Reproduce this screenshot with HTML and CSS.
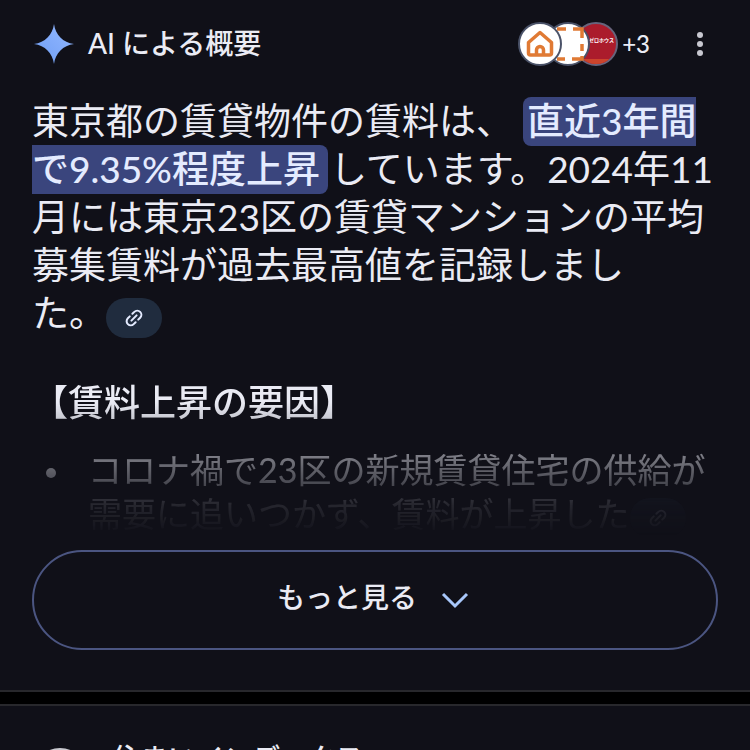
FILE: index.html
```html
<!DOCTYPE html>
<html lang="ja">
<head>
<meta charset="utf-8">
<meta name="viewport" content="width=device-width, initial-scale=1">
<title>AI による概要</title>
<link rel="stylesheet" href="styles.css">
</head>
<body>
<svg class="defs" aria-hidden="true">
  <symbol id="link" viewBox="0 0 24 24">
    <g transform="rotate(-45 12 12)" fill="none" stroke="currentColor" stroke-width="2.2" stroke-linecap="round">
      <path d="M10 7.500H7a4.500 4.500 0 0 0 0 9h3"/>
      <path d="M14 7.500h3a4.500 4.500 0 0 1 0 9h-3"/>
      <path d="M8 12h8"/>
    </g>
  </symbol>
</svg>
<main class="card overview">
  <header class="head">
    <svg class="spark" viewBox="0 0 40 40" aria-hidden="true">
      <defs><linearGradient id="blue" x1="0" y1="1" x2="1" y2="0"><stop offset="0" stop-color="#6e9df5"/><stop offset="1" stop-color="#94b9ff"/></linearGradient></defs>
      <path fill="url(#blue)" d="M20 0C21.500 11 29 18.500 40 20C29 21.500 21.500 29 20 40C18.500 29 11 21.500 0 20C11 18.500 18.500 11 20 0Z"/>
    </svg>
    <h1 class="title">AI による概要</h1>
    <button class="sources" type="button" aria-label="ソース">
      <svg class="source front" viewBox="0 0 44 44" aria-hidden="true">
        <circle cx="22" cy="22" r="21" fill="#fff" stroke="#4a5268" stroke-width="2"/>
        <path d="M10.500 20.500L22 10.500l11.500 10V31q0 2-2 2h-19q-2 0-2-2ZM18.500 33v-5a3.500 3.500 0 0 1 7 0v5" fill="none" stroke="#e07a34" stroke-width="3.500" stroke-linejoin="round"/>
      </svg>
      <svg class="source middle" viewBox="0 0 44 44" aria-hidden="true">
        <circle cx="22" cy="22" r="21" fill="#fff" stroke="#4a5268" stroke-width="2"/>
        <path d="M11 7h9M27 7h9v9M36 22v7M11 37h8M26 37h10v-3" fill="none" stroke="#e07a34" stroke-width="3.500"/>
      </svg>
      <svg class="source back" viewBox="0 0 44 44" aria-hidden="true">
        <defs><clipPath id="disc"><circle cx="22" cy="22" r="20"/></clipPath></defs>
        <circle cx="22" cy="22" r="21" fill="#ab1c2c" stroke="#68647c" stroke-width="2"/>
        <path clip-path="url(#disc)" d="M0 37h44v7H0Z" fill="#cc442c"/>
        <text class="brand" x="15" y="20">ゼロホウス</text>
      </svg>
      <span class="count">+3</span>
    </button>
    <button class="menu" type="button" aria-label="メニュー">
      <svg viewBox="0 0 8 28" aria-hidden="true"><g fill="#c8c8d0"><circle cx="4" cy="5" r="3"/><circle cx="4" cy="14" r="3"/><circle cx="4" cy="23" r="3"/></g></svg>
    </button>
  </header>
  <p class="summary">東京都の賃貸物件の賃料は、<mark>直近3年間で9.35%程度上昇</mark>しています。2024年11月には東京23区の賃貸マンションの平均募集賃料が過去最高値を記録しまし<span class="keep">た。<a class="cite" href="#source-1" aria-label="リンク"><svg viewBox="0 0 24 24"><use href="#link"/></svg></a></span></p>
  <section class="more-text">
    <h2>【賃料上昇の要因】</h2>
    <ul>
      <li>コロナ禍で23区の新規賃貸住宅の供給が需要に追いつかず、賃料が上昇した<a class="cite" href="#source-2" aria-label="リンク"><svg viewBox="0 0 24 24"><use href="#link"/></svg></a></li>
    </ul>
  </section>
  <button class="expand" type="button">
    <span>もっと見る</span>
    <svg viewBox="0 0 28 18" aria-hidden="true"><path d="M2 3l12 12L26 3" fill="none" stroke="#a8c7fa" stroke-width="3"/></svg>
  </button>
</main>
<article class="card result">
  <span class="favicon"></span>
  <span class="site">住まいインデックス</span>
</article>
</body>
</html>
```
FILE: styles.css
```css
* { box-sizing: border-box; }

body {
  margin: 0;
  height: 100vh;
  overflow: hidden;
  background: #000;
  color: #eaebf4;
  font-family: Lato, "Noto Sans CJK JP", sans-serif;
}

button {
  padding: 0;
  border: 0;
  background: none;
  color: inherit;
  font: inherit;
}

h1, h2, p, ul { margin: 0; padding: 0; }

.defs { position: absolute; width: 0; height: 0; }

.card { background: #101018; border: 0 solid #28282c; }

.overview { padding: 20px 32px 40px; border-bottom-width: 2px; }

.head { display: flex; align-items: center; height: 48px; }

.spark { width: 40px; height: 40px; margin: 0 14px 0 2px; }

.title { flex: 1; padding-bottom: 2px; font-size: 28px; font-weight: 500; line-height: 40px; }

.sources { display: flex; align-items: center; }

.source { position: relative; width: 44px; height: 44px; }
.front { z-index: 2; }
.middle { z-index: 1; margin-left: -16px; }
.back { margin-left: -16px; }

.brand { fill: #fff; font-size: 5px; font-weight: 700; }

.count { margin-left: 4px; padding-bottom: 2px; font-size: 24px; font-weight: 500; }

.menu { display: flex; margin: 0 14px 0 46px; }
.menu svg { width: 8px; height: 28px; }

.summary {
  margin-top: 29px;
  font-size: 37px;
  line-height: 48px;
}

mark {
  margin: 0 2px 0 10px;
  padding: 1px 8px 3px 4px;
  border-radius: 8px;
  background: #3a457d;
  color: #e4ebff;
  font-weight: 500;
}

.keep { white-space: nowrap; }

.cite {
  display: inline-flex;
  align-items: center;
  justify-content: center;
  width: 56px;
  height: 40px;
  border-radius: 20px;
  background: #202c3e;
  color: #e4ebff;
  vertical-align: middle;
}
.cite svg { width: 22px; height: 22px; }

.more-text {
  margin-top: 38px;
  height: 174px;
  overflow: hidden;
  -webkit-mask-image: linear-gradient(#000 15%, rgba(0, 0, 0, 0.38) 53%, rgba(0, 0, 0, 0.1) 74%, transparent 92%);
  mask-image: linear-gradient(#000 15%, rgba(0, 0, 0, 0.38) 53%, rgba(0, 0, 0, 0.1) 74%, transparent 92%);
}

.more-text h2 { font-size: 36px; font-weight: 500; line-height: 52px; }

.more-text ul { margin-top: 20px; list-style: none; }

.more-text li {
  position: relative;
  padding-left: 56px;
  font-size: 34px;
  line-height: 44px;
}

.more-text li::before {
  content: "";
  position: absolute;
  top: 20px;
  left: 14px;
  width: 10px;
  height: 10px;
  border-radius: 50%;
  background: currentColor;
}

.expand {
  display: flex;
  align-items: center;
  justify-content: center;
  gap: 24px;
  width: 100%;
  height: 100px;
  padding-right: 4px;
  border: 2px solid #4b5581;
  border-radius: 50px;
  font-size: 28px;
  font-weight: 500;
}
.expand span { padding-bottom: 8px; }
.expand svg { width: 28px; height: 18px; }

.result {
  display: flex;
  gap: 24px;
  margin-top: 12px;
  padding: 32px;
  border-top-width: 2px;
}

.favicon { width: 56px; height: 56px; margin-top: 10px; border-radius: 50%; background: #c9c9cf; }

.site { font-size: 28px; font-weight: 500; line-height: 40px; }
```
